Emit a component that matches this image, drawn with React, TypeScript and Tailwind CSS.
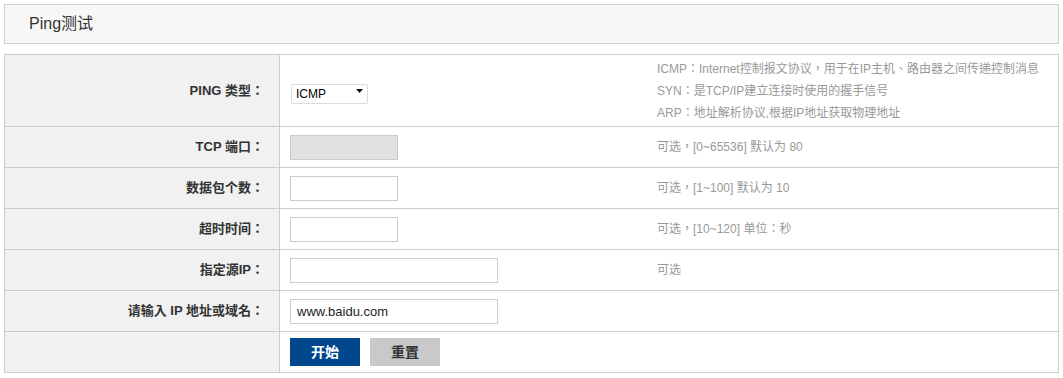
import { ChangeEvent, useState } from "react";

const font = { fontFamily: '"Liberation Sans", Arial, "Noto Sans CJK TC", sans-serif' };

type Row = {
  label: string;
  hint?: string[];
  field: "select" | "tcp" | "short" | "long" | "host" | "buttons";
};

const rows: Row[] = [
  {
    label: "PING 类型：",
    field: "select",
    hint: [
      "ICMP：Internet控制报文协议，用于在IP主机、路由器之间传递控制消息",
      "SYN：是TCP/IP建立连接时使用的握手信号",
      "ARP：地址解析协议,根据IP地址获取物理地址",
    ],
  },
  { label: "TCP 端口：", field: "tcp", hint: ["可选，[0~65536] 默认为 80"] },
  { label: "数据包个数：", field: "short", hint: ["可选，[1~100] 默认为 10"] },
  { label: "超时时间：", field: "short", hint: ["可选，[10~120] 单位：秒"] },
  { label: "指定源IP：", field: "long", hint: ["可选"] },
  { label: "请输入 IP 地址或域名：", field: "host" },
  { label: "", field: "buttons" },
];

export default function App() {
  const [type, setType] = useState("ICMP");
  const [host, setHost] = useState("www.baidu.com");

  const renderField = (field: Row["field"]) => {
    switch (field) {
      case "select":
        return (
          <div className="relative w-[77px] h-[20px] ml-[1px]">
            <select
              value={type}
              onChange={(e: ChangeEvent<HTMLSelectElement>) => setType(e.target.value)}
              className="appearance-none w-full h-full border border-[#dcdcdc] rounded-[2px] bg-white pl-[4px] text-[12px] text-black outline-none"
              style={font}
            >
              <option>ICMP</option>
              <option>SYN</option>
              <option>ARP</option>
            </select>
            {/* dropdown arrow */}
            <svg
              className="pointer-events-none absolute right-[5px] top-[8px]"
              width="7"
              height="4"
              viewBox="0 0 7 4"
            >
              <path d="M0 0h7L3.5 4z" fill="#111" />
            </svg>
          </div>
        );
      case "tcp":
        return <input disabled className="w-[108px] h-[25px] border border-[#cccccc] bg-[#e1e1e1]" />;
      case "short":
        return <input className="w-[108px] h-[25px] border border-[#cccccc] bg-white outline-none" />;
      case "long":
        return <input className="w-[208px] h-[25px] border border-[#cccccc] bg-white outline-none" />;
      case "host":
        return (
          <input
            value={host}
            onChange={(e) => setHost(e.target.value)}
            className="w-[208px] h-[25px] border border-[#cccccc] bg-white pl-[6px] text-[13px] text-[#222] outline-none"
            style={font}
          />
        );
      case "buttons":
        return (
          <div className="flex gap-[10px]">
            <button className="w-[70px] h-[28px] bg-[#00478d] text-white text-[14px] font-bold">开始</button>
            <button className="w-[70px] h-[28px] bg-[#c9c9c9] text-[#333] text-[14px] font-bold">重置</button>
          </div>
        );
    }
  };

  return (
    <div className="px-[4px] pt-[4px] bg-white min-h-[378px]" style={font}>
      {/* Title bar */}
      <div className="h-[40px] border border-[#d0d0d0] bg-[#f7f7f7] flex items-center pl-[24px] text-[16px] text-[#333]">
        Ping测试
      </div>

      {/* Form table */}
      <div className="mt-[10px] border border-[#cccccc]">
        {rows.map((row, i) => (
          <div
            key={i}
            className={`grid grid-cols-[275px_377px_1fr] ${i > 0 ? "border-t border-[#cccccc]" : ""} ${
              i === 0 ? "h-[71px]" : "h-[41px]"
            }`}
          >
            <div className="bg-[#f1f1f1] border-r border-[#cccccc] flex items-center justify-end pr-[15px] text-[13px] font-bold text-[#333]">
              {row.label}
            </div>
            <div className="flex items-center pl-[10px]">{renderField(row.field)}</div>
            <div className="flex flex-col justify-center text-[12px] leading-[22px] text-[#999]">
              {row.hint?.map((h) => (
                <div key={h}>{h}</div>
              ))}
            </div>
          </div>
        ))}
      </div>
    </div>
  );
}
